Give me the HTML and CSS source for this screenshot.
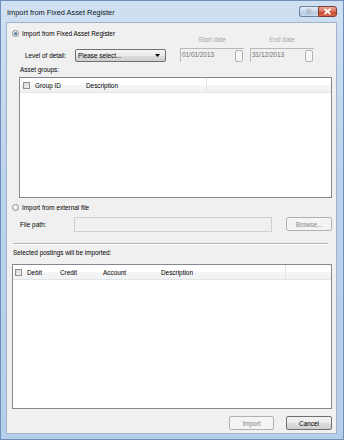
FILE: index.html
```html
<!DOCTYPE html>
<html lang="en">
<head>
  <meta charset="UTF-8">
  <title>Import from Fixed Asset Register</title>
  <link rel="stylesheet" href="styles.css">
</head>
<body>
  <div class="window">
    <div class="titlebar">
      <span class="title">Import from Fixed Asset Register</span>
      <div class="caption-buttons">
        <span class="cap-btn help">?</span>
        <span class="cap-btn close">
          <svg width="9" height="7" viewBox="0 0 9 7"><path d="M1.5 0.8 L7.5 6.2 M7.5 0.8 L1.5 6.2" stroke="#fff" stroke-width="1.8" fill="none"/></svg>
        </span>
      </div>
    </div>

    <div class="client">
      <div class="radio-row">
        <span class="radio checked"></span>
        <span>Import from Fixed Asset Register</span>
      </div>

      <div class="detail-row">
        <span class="level-label">Level of detail:</span>
        <div class="combo">
          <span>Please select...</span>
          <svg width="5" height="3" viewBox="0 0 5 3"><path d="M0 0 H5 L2.5 3 Z" fill="#000"/></svg>
        </div>
        <div class="date-group first">
          <span class="date-label">Start date</span>
          <div class="date-box"><span class="date-text">01/01/2013</span><span class="date-btn"></span></div>
        </div>
        <div class="date-group">
          <span class="date-label">End date</span>
          <div class="date-box"><span class="date-text">31/12/2013</span><span class="date-btn"></span></div>
        </div>
      </div>

      <div class="group-label">Asset groups:</div>
      <div class="listview groups">
        <div class="lv-header">
          <div class="col col-group"><span class="checkbox"></span>Group ID</div>
          <div class="col col-desc">Description</div>
        </div>
      </div>

      <div class="radio-row second">
        <span class="radio"></span>
        <span>Import from external file</span>
      </div>

      <div class="file-row">
        <span class="file-label">File path:</span>
        <div class="text-field"></div>
        <button class="win-btn disabled browse">Browse...</button>
      </div>

      <div class="separator"></div>

      <div class="postings-label">Selected postings will be imported:</div>
      <div class="listview postings">
        <div class="lv-header">
          <div class="col col-debit"><span class="checkbox"></span>Debit</div>
          <div class="col col-credit">Credit</div>
          <div class="col col-account">Account</div>
          <div class="col col-pdesc">Description</div>
        </div>
      </div>

      <div class="button-row">
        <button class="win-btn disabled">Import</button>
        <button class="win-btn">Cancel</button>
      </div>
    </div>
  </div>
</body>
</html>
```

FILE: styles.css
```css
* {
  margin: 0;
  padding: 0;
  box-sizing: border-box;
}

body {
  width: 344px;
  height: 440px;
  overflow: hidden;
  font-family: 'Liberation Sans', Arial, sans-serif;
  font-size: 6.4px;
  color: #000;
}

.window {
  width: 344px;
  height: 440px;
  display: flex;
  flex-direction: column;
  background: linear-gradient(180deg, #cfe0f2 0%, #bcd3ec 40%, #b6cee9 100%);
  border: 1px solid #6f8fb6;
}

/* Title bar */
.titlebar {
  height: 21px;
  display: flex;
  justify-content: space-between;
  align-items: flex-start;
  padding-left: 6px;
  padding-right: 6px;
}

.title {
  font-size: 7.4px;
  line-height: 8px;
  margin-top: 8px;
  color: #0f1723;
}

.caption-buttons {
  display: flex;
  margin-top: 5px;
}

.cap-btn {
  height: 11px;
  display: flex;
  align-items: center;
  justify-content: center;
  border: 1px solid #6e84a2;
  font-size: 8px;
  font-weight: bold;
}

.help {
  width: 19px;
  border-radius: 3px 0 0 3px;
  border-right: none;
  background: linear-gradient(180deg, #e4edf7 0%, #c8d8ea 50%, #b5c9e0 51%, #c7d9ec 100%);
  color: #fff;
  text-shadow: 0 0 1px #3c5474, 0 0 1px #3c5474;
}

.close {
  width: 19px;
  border-radius: 0 3px 3px 0;
  border-color: #7d3a33;
  background: linear-gradient(180deg, #e9a99b 0%, #d8705b 50%, #c74228 51%, #d86a4c 100%);
}

/* Client area */
.client {
  flex: 1;
  margin: 0 6px 5px 5px;
  border: 1px solid #9fb3cc;
  background-color: #f0f0f0;
  padding: 0 4px 0 5px;
  display: flex;
  flex-direction: column;
}

.radio-row {
  height: 9px;
  margin-top: 6px;
  display: flex;
  align-items: center;
  gap: 3px;
  line-height: 9px;
}

.radio-row.second {
  height: 8px;
  margin-top: 5px;
}

.radio {
  width: 7px;
  height: 7px;
  border-radius: 50%;
  border: 1px solid #8c8f94;
  background: radial-gradient(circle at 40% 35%, #ffffff 0%, #e4e4e4 70%, #d0d0d0 100%);
  position: relative;
}

.radio.checked::after {
  content: '';
  position: absolute;
  left: 1px;
  top: 1px;
  width: 3px;
  height: 3px;
  border-radius: 50%;
  background: radial-gradient(circle at 35% 35%, #7fa4cf 0%, #2b4f80 70%);
}

/* Level of detail + dates */
.detail-row {
  height: 26px;
  margin-top: -2px;
  display: flex;
  align-items: flex-end;
}

.level-label {
  width: 50px;
  margin-left: 13px;
  line-height: 13px;
  height: 13px;
}

.combo {
  width: 91px;
  height: 13px;
  border: 1px solid #707070;
  border-radius: 2px;
  background: linear-gradient(180deg, #f4f4f4 0%, #ebebeb 50%, #dddddd 51%, #cfcfcf 100%);
  display: flex;
  align-items: center;
  justify-content: space-between;
  padding: 0 5px 0 2px;
}

.date-group {
  width: 64px;
  margin-left: 6px;
  display: flex;
  flex-direction: column;
  align-items: stretch;
}

.date-group.first {
  margin-left: 14px;
}

.date-label {
  height: 8px;
  line-height: 8px;
  margin-bottom: 4px;
  text-align: center;
  color: #a7a7a7;
}

.date-box {
  height: 14px;
  display: flex;
  justify-content: space-between;
  border-top: 1px solid #b9b9b9;
  border-left: 1px solid #b9b9b9;
}

.date-text {
  color: #6d6d6d;
  line-height: 11px;
  padding-left: 1px;
}

.date-btn {
  width: 8px;
  height: 12px;
  margin-top: 1px;
  margin-right: 1px;
  border: 1px solid #b3b3b3;
  border-radius: 2px;
  background-color: #f6f6f6;
}

/* List views */
.group-label {
  height: 8px;
  line-height: 8px;
  margin-top: 4px;
  margin-left: 8px;
}

.listview {
  background-color: #fff;
  border: 1px solid #828790;
}

.listview.groups {
  height: 121px;
  margin-top: 3px;
  margin-left: 7px;
}

.listview.postings {
  height: 145px;
  margin-top: 7px;
}

.lv-header {
  height: 15px;
  display: flex;
  align-items: stretch;
  background: linear-gradient(180deg, #ffffff 0%, #ffffff 50%, #f4f5f7 51%, #f1f2f4 100%);
  border-bottom: 1px solid #e3e4e6;
}

.col {
  display: flex;
  align-items: center;
  padding-left: 3px;
}

.checkbox {
  width: 7px;
  height: 7px;
  border: 1px solid #8e8f8f;
  background: linear-gradient(135deg, #d6d6d6 0%, #f4f4f4 100%);
  margin-right: 5px;
}

.col-group { width: 63px; }
.col-desc { width: 124px; border-right: 1px solid #e5e5e5; }

.col-debit { width: 44px; padding-left: 2px; }
.col-credit { width: 43px; }
.col-account { width: 58px; }
.col-pdesc { width: 128px; border-right: 1px solid #e5e5e5; }

/* File path */
.file-row {
  height: 15px;
  margin-top: 6px;
  display: flex;
  align-items: flex-start;
}

.file-label {
  width: 54px;
  margin-left: 8px;
  line-height: 15px;
}

.text-field {
  width: 198px;
  height: 15px;
  border: 1px solid #d0d0d0;
  background-color: #f0f0f0;
}

.win-btn {
  font-family: 'Liberation Sans', Arial, sans-serif;
  font-size: 6.4px;
  height: 14px;
  width: 46px;
  border: 1px solid #707070;
  border-radius: 2px;
  background: linear-gradient(180deg, #f2f2f2 0%, #ebebeb 50%, #dddddd 51%, #cfcfcf 100%);
  color: #000;
}

.win-btn.disabled {
  border-color: #adb2b5;
  background: #f4f4f4;
  color: #838383;
}

.browse {
  margin-left: 14px;
}

.separator {
  margin-top: 11px;
  margin-left: 1px;
  margin-right: 4px;
  border-top: 1px solid #b4b4b4;
  border-bottom: 1px solid #ffffff;
}

.postings-label {
  height: 8px;
  line-height: 8px;
  margin-top: 4px;
  margin-left: 1px;
}

.button-row {
  margin-top: 7px;
  display: flex;
  justify-content: flex-end;
  gap: 12px;
}

.button-row .win-btn:first-child {
  width: 45px;
}
```
